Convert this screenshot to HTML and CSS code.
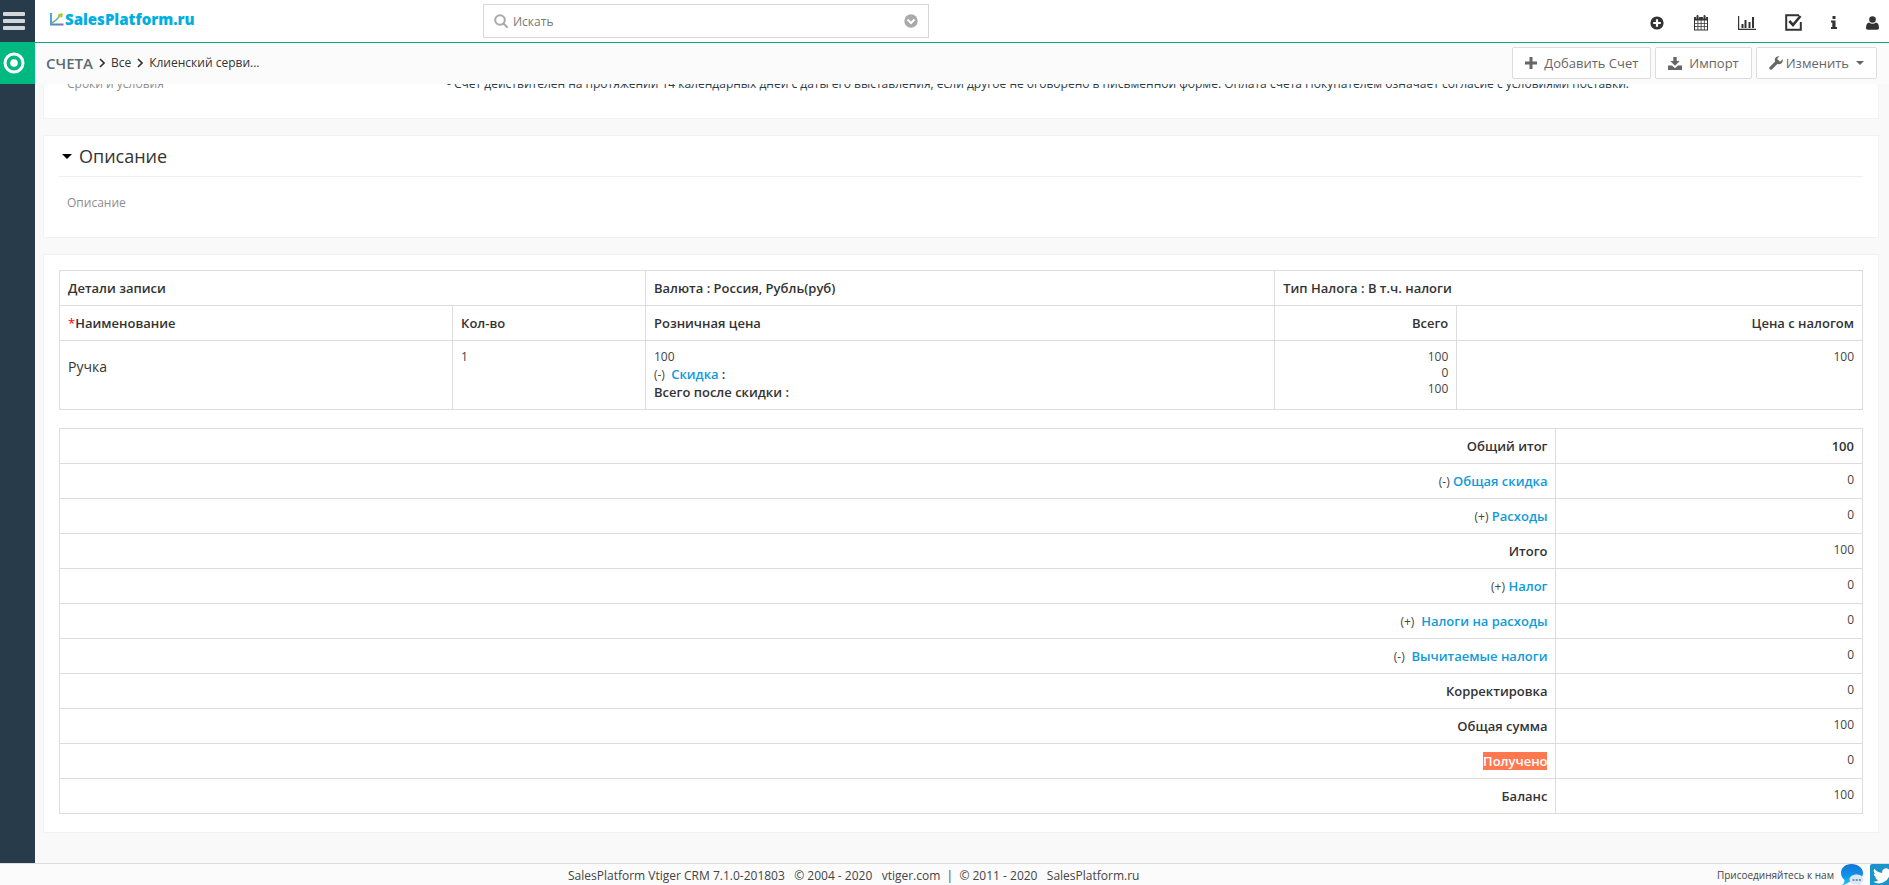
FILE: index.html
```html
<!DOCTYPE html>
<html lang="ru">
<head>
<meta charset="utf-8">
<title>Счета</title>
<link rel="stylesheet" href="styles.css">
</head>
<body>
<div class="app">
  <aside class="rail">
    <button class="rail-btn" aria-label="Меню"><svg width="22" height="18" viewBox="0 0 22 18" fill="#d3d7da"><rect width="22" height="4" rx="1"/><rect y="7" width="22" height="4" rx="1"/><rect y="14" width="22" height="4" rx="1"/></svg></button>
    <button class="rail-btn rail-active" aria-label="Счета"><svg width="22" height="22" viewBox="0 0 22 22"><circle cx="11" cy="11" r="9" fill="none" stroke="#fff" stroke-width="3"/><circle cx="11" cy="11" r="3.800" fill="#fff"/></svg></button>
  </aside>
  <div class="page">
    <header class="topbar">
      <a class="logo" href="#"><svg width="14" height="14" viewBox="0 0 14 14" fill="none"><defs><linearGradient id="ax" x1="0" y1="0" x2="1" y2="1"><stop stop-color="#2fa9d6"/><stop offset="1" stop-color="#7a72b8"/></linearGradient></defs><path d="M1 1v11.500h12.500" stroke="url(#ax)" stroke-width="1.800"/><path d="M2 11C6 9 8 6 10 4" stroke="#5bb6a0" stroke-width="1.500"/><path d="M8 2.500l4-1.500 1 1-1 3.500-2-.5-2 1z" fill="#a5cf3a"/></svg><span>SalesPlatform.ru</span></a>
      <label class="search">
        <svg width="14" height="14" viewBox="0 0 14 14" fill="none" stroke="#a9a9a9" stroke-width="2"><circle cx="6" cy="6" r="4.800"/><path d="M9.500 9.500l3.500 3.500" stroke-linecap="round"/></svg>
        <input type="text" placeholder="Искать" aria-label="Искать">
        <svg width="14" height="14" viewBox="0 0 14 14"><circle cx="7" cy="7" r="6.700" fill="#a9a9a9"/><path d="M3.500 5.500L7 9l3.500-3.500" fill="none" stroke="#fff" stroke-width="2"/></svg>
      </label>
      <nav class="tools">
        <a href="#" aria-label="Создать"><svg width="14" height="14" viewBox="0 0 14 14"><circle cx="7" cy="7" r="6.600" fill="#333"/><path d="M7 3.200v7.600M3.200 7h7.600" stroke="#fff" stroke-width="2.200"/></svg></a>
        <a href="#" aria-label="Календарь"><svg width="16" height="16" viewBox="0 0 16 16"><path d="M1 2h14v13.500H1z" fill="#333"/><path d="M2 5.500h2.500V8H2zM5.300 5.500h2.400V8H5.300zM8.500 5.500h2.400V8H8.500zM11.700 5.500H14V8h-2.300zM2 8.800h2.500v2.400H2zM5.300 8.800h2.400v2.400H5.300zM8.500 8.800h2.400v2.400H8.500zM11.700 8.800H14v2.400h-2.300zM2 12h2.500v2.500H2zM5.300 12h2.400v2.500H5.300zM8.500 12h2.400v2.500H8.500zM11.700 12H14v2.500h-2.300z" fill="#fff"/><path d="M4.500 .5v3M11.500 .5v3" stroke="#fff" stroke-width="3.200"/><path d="M4.500 1v2.300M11.500 1v2.300" stroke="#333" stroke-width="2" stroke-linecap="round"/></svg></a>
        <a href="#" aria-label="Отчёты"><svg width="18" height="14" viewBox="0 0 18 14" fill="none" stroke="#333"><path d="M.6 0v13.400H18" stroke-width="1.200"/><path d="M4.500 12V8M7.500 12V4M11.500 12V6M15 12V1" stroke-width="2"/></svg></a>
        <a href="#" aria-label="Задачи"><svg width="17" height="17" viewBox="0 0 17 17" fill="none" stroke="#333"><path d="M14 1.200H1.200v14.600h14.600V8" stroke-width="2"/><path d="M4.300 7l3.700 4L15.500 2" stroke-width="2.600"/></svg></a>
        <a href="#" aria-label="Информация"><svg width="6" height="13" viewBox="0 0 6 13" fill="#333"><path d="M1.500 0h3v3h-3zM0 4.500h4.500V11H6v2H0v-2h1.300V6.500H0z"/></svg></a>
        <a href="#" aria-label="Профиль"><svg width="13" height="14" viewBox="0 0 13 14" fill="#333"><circle cx="6.500" cy="3.500" r="3.300"/><path d="M3 6.500c2 1.600 5 1.600 7 0 2.400.5 3 3 3 5.500 0 1-.8 1.700-1.800 1.700H1.800C.8 13.700 0 13 0 12c0-2.500.6-5 3-5.500z"/></svg></a>
      </nav>
    </header>
    <div class="modulebar">
      <nav class="crumbs">
        <a class="module" href="#">СЧЕТА</a>
        <svg width="6" height="10" viewBox="0 0 6 10"><path d="M1 1l4 4-4 4" fill="none" stroke="#333" stroke-width="1.600"/></svg>
        <a href="#">Все</a>
        <svg width="6" height="10" viewBox="0 0 6 10"><path d="M1 1l4 4-4 4" fill="none" stroke="#333" stroke-width="1.600"/></svg>
        <a href="#">Клиенский серви...</a>
      </nav>
      <div class="actions">
        <button class="btn"><svg width="12" height="12" viewBox="0 0 12 12"><path d="M6 0v12M0 6h12" stroke="#666" stroke-width="3"/></svg><span>Добавить Счет</span></button>
        <button class="btn"><svg width="14" height="13" viewBox="0 0 14 13" fill="#666"><path d="M5.300 0h3.400v4h3L7 8.700 2.300 4h3z"/><path d="M0 8.500h4L7 11.300l3-2.800h4V13H0z"/></svg><span>Импорт</span></button>
        <button class="btn btn-menu"><svg width="14" height="14" viewBox="0 0 14 14"><path d="M1.900 12.100L8.500 5.500" stroke="#666" stroke-width="3.200" stroke-linecap="round"/><path d="M13.700 3.200a4 4 0 1 1-3.300-3L8.300 2.400l.5 2.600 2.600.5z" fill="#666"/></svg><span>Изменить</span><svg class="caret" width="8" height="4" viewBox="0 0 8 4"><path d="M0 0h8L4 4z" fill="#666"/></svg></button>
      </div>
    </div>
    <main class="content">
      <section class="card terms">
        <div class="field"><span class="field-name">Сроки и условия</span><span class="field-value">- Счет действителен на протяжении 14 календарных дней с даты его выставления, если другое не оговорено в письменной форме. Оплата счета Покупателем означает согласие с условиями поставки.</span></div>
      </section>
      <section class="card description">
        <h4><svg width="10" height="5" viewBox="0 0 10 5"><path d="M0 0h10L5 5z"/></svg>Описание</h4>
        <div class="field"><span class="field-name">Описание</span></div>
      </section>
      <section class="card details">
        <table class="items">
          <colgroup><col class="c-name"><col class="c-qty"><col class="c-price"><col class="c-total"><col></colgroup>
          <thead>
            <tr><th colspan="2">Детали записи</th><th>Валюта : Россия, Рубль(руб)</th><th colspan="2">Тип Налога : В т.ч. налоги</th></tr>
            <tr><th><span class="req">*</span>Наименование</th><th>Кол-во</th><th>Розничная цена</th><th class="num">Всего</th><th class="num">Цена с налогом</th></tr>
          </thead>
          <tbody>
            <tr><td><div class="product">Ручка</div></td><td>1</td><td><div>100</div><div class="line">(-)&nbsp; <a href="#">Скидка</a> <b>:</b></div><div class="line"><b>Всего после скидки :</b></div></td><td class="num"><div>100</div><div>0</div><div>100</div></td><td class="num">100</td></tr>
          </tbody>
        </table>
        <table class="totals">
          <colgroup><col class="c-label"><col></colgroup>
          <tbody>
            <tr><th>Общий итог</th><td><b>100</b></td></tr>
            <tr><th><i>(-)</i> <a href="#">Общая скидка</a></th><td>0</td></tr>
            <tr><th><i>(+)</i> <a href="#">Расходы</a></th><td>0</td></tr>
            <tr><th>Итого</th><td>100</td></tr>
            <tr><th><i>(+)</i> <a href="#">Налог</a></th><td>0</td></tr>
            <tr><th><i>(+)</i>&nbsp; <a href="#">Налоги на расходы</a></th><td>0</td></tr>
            <tr><th><i>(-)</i>&nbsp; <a href="#">Вычитаемые налоги</a></th><td>0</td></tr>
            <tr><th>Корректировка</th><td>0</td></tr>
            <tr><th>Общая сумма</th><td>100</td></tr>
            <tr><th><mark>Получено</mark></th><td>0</td></tr>
            <tr><th>Баланс</th><td>100</td></tr>
          </tbody>
        </table>
      </section>
    </main>
  </div>
  <footer class="footer">
    <p>SalesPlatform Vtiger CRM 7.1.0-201803 &nbsp; © 2004 - 2020 &nbsp; <a href="#">vtiger.com</a> &nbsp;|&nbsp; © 2011 - 2020 &nbsp; <a href="#">SalesPlatform.ru</a></p>
    <div class="social"><span>Присоединяйтесь к нам</span>
      <a href="#" aria-label="Форум"><svg width="24" height="24" viewBox="0 0 24 24"><defs><linearGradient id="bub" x1="0" y1="0" x2="0" y2="1"><stop stop-color="#1673d2"/><stop offset=".6" stop-color="#0a97ee"/><stop offset="1" stop-color="#35c4f7"/></linearGradient></defs><path d="M11.500 0C5 0 1 4 1 9c0 3 1.500 5.500 3.500 7 0 2-1 4-2.500 5C5 21 7.500 20 9 18c8 .7 14-3 14-9 0-5-5-9-11.500-9z" fill="url(#bub)"/><path d="M16.500 10.500c-4 0-7 2.200-7 5s3 5 7 5c1.500 1 3 1.500 5 1.500-1-.8-1-1.500-1-2.500 2-1 3-2.300 3-4 0-2.800-3-5-7-5z" fill="#d9e7f2"/><path d="M12.500 15h2v2h-2zM15.700 15h2v2h-2zM18.900 15h2v2h-2z" fill="#6f94b5"/></svg></a>
      <a href="#" aria-label="Twitter"><svg width="24" height="24" viewBox="0 0 24 24"><rect width="24" height="24" rx="2" fill="#1b95c9"/><path transform="translate(3 4) scale(.78)" d="M24 2.600c-.9.400-1.800.7-2.800.8 1-.6 1.800-1.600 2.200-2.700-1 .6-2 1-3.100 1.200A4.900 4.900 0 0 0 11.900 6.300 14 14 0 0 1 1.700 1.100 4.900 4.900 0 0 0 3.200 7.700C2.400 7.600 1.600 7.400 1 7c0 2.400 1.700 4.400 3.900 4.900-.7.200-1.500.2-2.200.1.600 2 2.400 3.400 4.600 3.400A9.900 9.900 0 0 1 0 17.400a14 14 0 0 0 21.500-12.400c1-.7 1.800-1.500 2.500-2.400z" fill="#fff"/></svg></a>
    </div>
  </footer>
</div>
</body>
</html>
```
FILE: styles.css
```css
* { box-sizing: border-box; }
body { margin: 0; font: 12px/16px "Open Sans", "Noto Sans", sans-serif; color: #444; background: #f9f9f9; }
a { color: inherit; text-decoration: none; }
svg { display: block; flex: none; }

.app { display: grid; grid-template-columns: 35px 1fr; grid-template-rows: 1fr 22px; height: 100vh; overflow: hidden; }
.rail { background: #283b4a; }
.rail-btn { display: flex; align-items: center; width: 100%; height: 42px; padding: 0 0 0 3px; border: 0; background: none; }
.rail-active { background: #00b981; }

.page { display: flex; flex-direction: column; min-width: 0; min-height: 0; }
.topbar { display: grid; grid-template-columns: 448px 446px 1fr; align-items: center; flex: none; height: 43px; background: #fff; border-bottom: 1px solid #0ea974; }
.logo { display: flex; align-items: center; gap: 1px; padding: 0 0 4px 15px; font-size: 15px; font-weight: 800; color: #00aee0; }
.search { display: flex; align-items: center; gap: 5px; height: 34px; padding: 0 10px; border: 1px solid #d5d8d8; }
.search input { flex: 1; min-width: 0; padding: 2px 0 0; border: 0; outline: 0; background: none; font: inherit; color: #777; }
.search input::placeholder { color: #777; opacity: 1; }
.tools { display: flex; align-items: center; justify-content: flex-end; gap: 29px; padding: 3px 10px 0 0; }

.modulebar { display: flex; align-items: center; justify-content: space-between; flex: none; height: 41px; padding: 0 12px 1px 11px; background: #fbfbfb; }
.crumbs { display: flex; align-items: center; gap: 6px; padding-bottom: 1px; color: #333; }
.module { padding-top: 1px; font-size: 15px; font-weight: 600; color: #5c6b77; }
.actions { display: flex; gap: 4px; }
.btn { display: flex; align-items: center; gap: 7px; height: 32px; padding: 0 12px; border: 1px solid #ddd; border-radius: 2px; background: #fff; color: #666; font: 13px/18px "Open Sans", "Noto Sans", sans-serif; }
.btn-menu { gap: 3px; }
.caret { margin-left: 4px; }

.content { flex: 1; min-height: 0; overflow: hidden; padding: 0 10px 0 8px; }
.card { padding: 15px; margin-bottom: 16px; background: #fff; border: 1px solid #f2f2f2; }
.field { display: flex; padding: 0 8px; }
.field-name { flex: 0 0 380px; color: #8e8e8e; }
.field-value { color: #2c3b49; }
.terms { margin-top: -24px; padding-bottom: 26px; }
.description { padding-top: 0; padding-bottom: 26px; }
.description h4 { display: flex; align-items: center; gap: 7px; height: 41px; margin: 0 0 18px; padding-left: 3px; border-bottom: 1px solid #eee; font-size: 18px; font-weight: 400; color: #333; }
.details { padding-bottom: 18px; }

table { width: 100%; border-collapse: collapse; table-layout: fixed; }
th, td { padding: 8px; border: 1px solid #ddd; text-align: left; vertical-align: top; }
th, b { font-size: 13px; line-height: 18px; font-weight: 600; color: #333; }
i { font-size: 12px; line-height: 12px; font-style: normal; font-weight: 400; color: #444; }
td a, th a { font-size: 13px; font-weight: 600; color: #0f9bd8; }
.num, .totals th, .totals td { text-align: right; }
.c-name { width: 21.8%; }
.c-qty { width: 10.7%; }
.c-price { width: 34.9%; }
.c-total { width: 10.1%; }
.c-label { width: 83%; }
.req { font-weight: 400; color: #f00; }
.line { height: 18px; line-height: 18px; }
.product { padding-top: 10px; font-size: 14px; color: #333; }
.totals { margin-top: 18px; }
mark { background: #ff7850; color: #fff; }

.footer { grid-column: 1 / -1; display: grid; grid-template-columns: 1fr auto; border-top: 1px solid #ddd; background: #fbfbfb; }
.footer p { margin: 0; padding: 4px 0 0 568px; white-space: nowrap; }
.social { display: flex; gap: 6px; font-size: 10px; margin-right: -5px; }
.social span { padding-top: 3px; }
```
